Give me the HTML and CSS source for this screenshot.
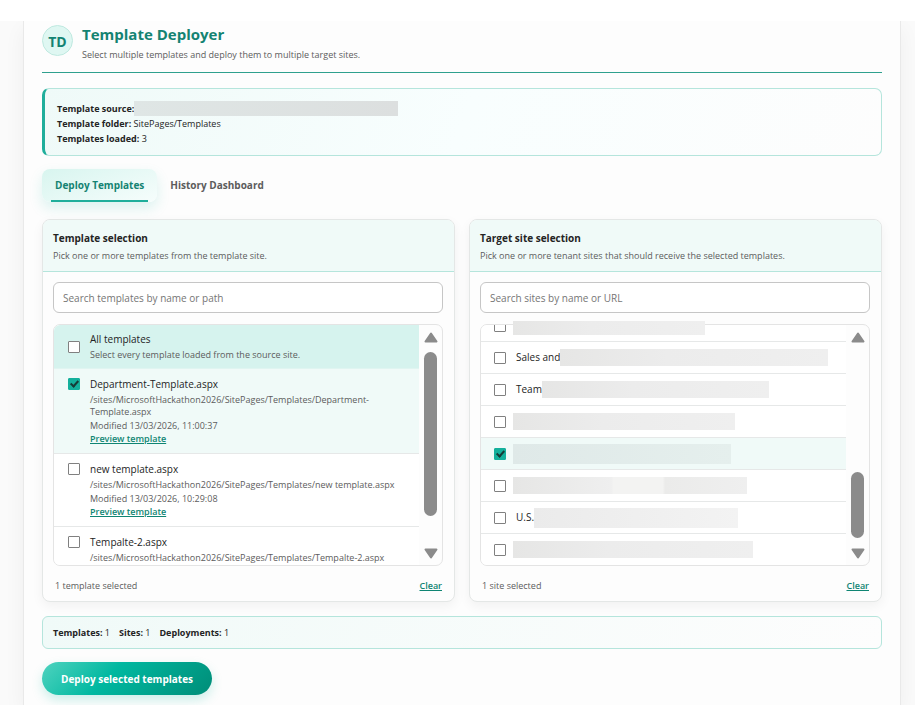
FILE: index.html
```
<!DOCTYPE html>
<html lang="en">
<head>
    <meta charset="UTF-8">
    <meta name="viewport" content="width=device-width, initial-scale=1.0">
    <title>Template Deployer</title>
    <link rel="stylesheet" href="styles.css">
</head>
<body>
<div class="topbar"></div>
<main class="shell">
    <header class="header">
        <div class="logo">TD</div>
        <div>
            <h1>Template Deployer</h1>
            <p>Select multiple templates and deploy them to multiple target sites.</p>
        </div>
    </header>

    <div class="info">
        <div class="info-line"><b>Template source:</b><span class="mask mask-source"></span></div>
        <div class="info-line"><b>Template folder:</b>&nbsp;SitePages/Templates</div>
        <div class="info-line"><b>Templates loaded:</b>&nbsp;3</div>
    </div>

    <nav class="tabs">
        <button type="button" class="tab active">Deploy Templates</button>
        <button type="button" class="tab">History Dashboard</button>
    </nav>

    <div class="panels">
        <section class="panel">
            <div class="panel-head">
                <h2>Template selection</h2>
                <p>Pick one or more templates from the template site.</p>
            </div>
            <div class="panel-body">
                <input type="text" class="search" placeholder="Search templates by name or path" aria-label="Search templates">
                <div class="list">
                    <div class="rows">
                        <div class="row all">
                            <input type="checkbox" id="t0">
                            <div class="row-text">
                                <label for="t0">All templates</label>
                                <p>Select every template loaded from the source site.</p>
                            </div>
                        </div>
                        <div class="row selected">
                            <input type="checkbox" id="t1" checked>
                            <div class="row-text">
                                <label for="t1">Department-Template.aspx</label>
                                <p>/sites/MicrosoftHackathon2026/SitePages/Templates/Department-Template.aspx</p>
                                <p>Modified 13/03/2026, 11:00:37</p>
                                <a href="#">Preview template</a>
                            </div>
                        </div>
                        <div class="row">
                            <input type="checkbox" id="t2">
                            <div class="row-text">
                                <label for="t2">new template.aspx</label>
                                <p>/sites/MicrosoftHackathon2026/SitePages/Templates/new template.aspx</p>
                                <p>Modified 13/03/2026, 10:29:08</p>
                                <a href="#">Preview template</a>
                            </div>
                        </div>
                        <div class="row">
                            <input type="checkbox" id="t3">
                            <div class="row-text">
                                <label for="t3">Tempalte-2.aspx</label>
                                <p>/sites/MicrosoftHackathon2026/SitePages/Templates/Tempalte-2.aspx</p>
                            </div>
                        </div>
                    </div>
                    <div class="scrollbar">
                        <svg width="14" height="11" viewBox="0 0 14 11"><path d="M7 1.5 L12.5 9.5 H1.5 Z"/></svg>
                        <div class="track"><div class="thumb thumb-top"></div></div>
                        <svg width="14" height="11" viewBox="0 0 14 11"><path d="M7 9.5 L12.5 1.5 H1.5 Z"/></svg>
                    </div>
                </div>
                <div class="panel-foot">
                    <span>1 template selected</span>
                    <a href="#">Clear</a>
                </div>
            </div>
        </section>

        <section class="panel">
            <div class="panel-head">
                <h2>Target site selection</h2>
                <p>Pick one or more tenant sites that should receive the selected templates.</p>
            </div>
            <div class="panel-body">
                <input type="text" class="search" placeholder="Search sites by name or URL" aria-label="Search sites">
                <div class="list">
                    <div class="mask mask-top"></div>
                    <div class="rows sites">
                        <div class="row"><input type="checkbox" id="s0" aria-label="Site"></div>
                        <div class="row"><input type="checkbox" id="s1"><label for="s1">Sales and</label><span class="mask" style="width:268px"></span></div>
                        <div class="row"><input type="checkbox" id="s2"><label for="s2">Team</label><span class="mask" style="width:227px"></span></div>
                        <div class="row"><input type="checkbox" id="s3" aria-label="Site"><span class="mask first" style="width:222px"></span></div>
                        <div class="row selected"><input type="checkbox" id="s4" aria-label="Site" checked><span class="mask first teal" style="width:218px"></span></div>
                        <div class="row"><input type="checkbox" id="s5" aria-label="Site"><span class="mask first patch" style="width:234px"></span></div>
                        <div class="row"><input type="checkbox" id="s6"><label for="s6">U.S.</label><span class="mask pale" style="width:204px"></span></div>
                        <div class="row"><input type="checkbox" id="s7" aria-label="Site"><span class="mask first" style="width:240px"></span></div>
                    </div>
                    <div class="scrollbar">
                        <svg width="14" height="11" viewBox="0 0 14 11"><path d="M7 1.5 L12.5 9.5 H1.5 Z"/></svg>
                        <div class="track end"><div class="thumb thumb-low"></div></div>
                        <svg width="14" height="11" viewBox="0 0 14 11"><path d="M7 9.5 L12.5 1.5 H1.5 Z"/></svg>
                    </div>
                </div>
                <div class="panel-foot">
                    <span>1 site selected</span>
                    <a href="#">Clear</a>
                </div>
            </div>
        </section>
    </div>

    <div class="summary">
        <span><b>Templates:</b> 1</span>
        <span><b>Sites:</b> 1</span>
        <span><b>Deployments:</b> 1</span>
    </div>

    <button type="button" class="deploy">Deploy selected templates</button>
</main>
</body>
</html>
```
FILE: styles.css
```
*, *::after {
    box-sizing: border-box;
}
html {
    height: 100%;
    overflow: hidden;
}
body {
    margin: 0;
    min-height: 100%;
    display: flex;
    flex-direction: column;
    background: #fafafa;
    color: #242424;
    font-family: "Open Sans", "Noto Sans", sans-serif;
    font-size: 9px;
    line-height: 12px;
}
h1, h2, p {
    margin: 0;
}
b, h2 {
    font-weight: 700;
}
button, input {
    font-family: inherit;
}
a {
    color: #0f8573;
    text-decoration: underline;
}

.topbar {
    height: 21px;
    background: #fff;
}
.shell {
    flex: 1;
    margin: 0 14px 0 23px;
    padding: 4px 18px 10px;
    background: #fdfdfd;
    border-left: 1px solid #e9e9e9;
    border-right: 1px solid #e9e9e9;
    box-shadow: 0 8px 20px rgba(0, 0, 0, 0.05);
    clip-path: inset(0 -30px);
}

/* header */
.header {
    display: flex;
    gap: 9px;
    height: 48px;
    border-bottom: 1px solid #2fa08e;
}
.logo {
    width: 31px;
    height: 31px;
    border: 1px solid #bfe9e0;
    border-radius: 50%;
    background: #dff7f2;
    color: #148372;
    font-size: 14px;
    font-weight: 700;
    line-height: 31px;
    text-align: center;
}
.header h1 {
    color: #148372;
    font-size: 15px;
    font-weight: 700;
    line-height: 18px;
}
.header p {
    margin-top: 6px;
    color: #5c5c5c;
}

/* source info */
.info {
    margin-top: 15px;
    padding: 12px 11px 9px 12px;
    border: 1px solid #b5e5dc;
    border-left: 3px solid #1fae9b;
    border-radius: 7px;
    background: linear-gradient(110deg, #effaf8, #f8fefe 50%, #fdfdfd);
}
.info-line {
    display: flex;
    align-items: center;
    height: 15px;
}

/* blanked out values */
.mask {
    height: 17px;
    background: linear-gradient(90deg, #e6e6e5, #ececec 40%, #efefef);
}
.mask-source {
    width: 264px;
    height: 15px;
    background: linear-gradient(90deg, #dfe6e5, #dcdfdf);
}
.mask-top {
    position: absolute;
    top: -4px;
    left: 32px;
    width: 192px;
    height: 14px;
}
.mask.teal {
    height: 20px;
    background: linear-gradient(90deg, #dfe9e8, #e5efed);
}
.mask.pale {
    height: 20px;
    background: linear-gradient(90deg, #ebebeb, #f3f3f3);
}
.mask.patch {
    background: linear-gradient(90deg, #e6e6e5, #efefef 42%, #f3f3f2 43%, #f3f3f2 64%, #ebebea 65%, #efefef);
}

/* tabs */
.tabs {
    display: flex;
    margin-top: 13px;
}
.tab {
    position: relative;
    height: 33px;
    padding: 0 13px 1px;
    border: 0;
    border-radius: 8px;
    background: none;
    color: #5c5c5c;
    font-size: 10px;
    font-weight: 700;
}
.tab.active {
    background: linear-gradient(160deg, #d8f5ef, #f6fdfc);
    box-shadow: 0 6px 14px rgba(0, 178, 155, 0.14);
    color: #148372;
}
.tab.active::after {
    content: "";
    position: absolute;
    left: 9px;
    right: 9px;
    bottom: 0;
    height: 2px;
    background: #1fae9b;
}

/* panels */
.panels {
    display: grid;
    grid-template-columns: 1fr 1fr;
    gap: 14px;
    margin-top: 17px;
}
.panel {
    border: 1px solid #e4e7e6;
    border-radius: 8px;
    background: #fdfdfd;
    box-shadow: 0 4px 12px rgba(0, 0, 0, 0.05);
}
.panel-head {
    height: 52px;
    padding: 10px;
    border-bottom: 1px solid #b5e5dc;
    border-radius: 7px 7px 0 0;
    background: #f0faf8;
}
.panel-head h2 {
    font-size: 10px;
    line-height: 16px;
}
.panel-head p {
    margin-top: 4px;
    color: #5c5c5c;
}
.panel-body {
    padding: 10px 11px 7px 10px;
}
.search {
    display: block;
    width: 100%;
    height: 31px;
    padding: 0 9px;
    border: 1px solid #c6c6c6;
    border-radius: 6px;
    background: #fff;
    color: #242424;
    font-size: 10px;
}
.search::placeholder {
    color: #757575;
}
.list {
    position: relative;
    display: flex;
    height: 242px;
    margin-top: 11px;
    border: 1px solid #e4e4e4;
    border-radius: 7px;
}
.rows {
    flex: 1;
    min-width: 0;
    display: flex;
    flex-direction: column;
    overflow: hidden;
    border-radius: 6px 0 0 6px;
    background: #fff;
}
.row {
    flex: none;
    display: flex;
    align-items: flex-start;
    padding: 8px 14px 7px;
    border-bottom: 1px solid #e6e8e8;
}
.row.all {
    align-items: center;
    padding: 7px 14px;
    border-color: #e0f5f1;
    background: #d6f3ee;
}
.row.selected {
    background: #f0faf8;
}
.row input {
    appearance: none;
    flex: none;
    position: relative;
    width: 12px;
    height: 12px;
    margin: 1px 10px 0 0;
    border: 1px solid #808080;
    border-radius: 1px;
    background: #fff;
}
.row.all input {
    margin-top: 0;
}
.row input:checked {
    border-color: #14b09c;
    background: #14b09c;
}
.row input:checked::after {
    content: "";
    position: absolute;
    left: 3px;
    top: 0;
    width: 5px;
    height: 8px;
    border: solid #163c37;
    border-width: 0 2px 2px 0;
    transform: rotate(42deg);
}
.row label {
    display: block;
    font-size: 10px;
    font-weight: 500;
    line-height: 15px;
}
.row-text {
    min-width: 0;
}
.row p {
    margin-top: 2px;
    color: #5c5c5c;
}
.row a {
    display: block;
    width: max-content;
    font-weight: 600;
    line-height: 14px;
}
.sites {
    justify-content: flex-end;
}
.sites .row {
    align-items: center;
    height: 32px;
    padding: 0 13px;
}
.sites .row:last-child {
    margin-bottom: -1px;
}
.sites .row input {
    margin-top: 0;
}
.sites .mask.first {
    margin-left: -3px;
}

/* scrollbar */
.scrollbar {
    display: flex;
    flex-direction: column;
    align-items: center;
    width: 23px;
    padding: 7px 0 6px;
}
.scrollbar svg {
    fill: #8b8b8b;
    stroke: #8b8b8b;
    stroke-width: 2;
    stroke-linejoin: round;
}
.track {
    flex: 1;
    display: flex;
    width: 13px;
    padding: 9px 0 10px;
}
.track.end {
    align-items: flex-end;
}
.thumb {
    width: 13px;
    border-radius: 7px;
    background: #8b8b8b;
}
.thumb-top {
    height: 164px;
}
.thumb-low {
    height: 66px;
}

.panel-foot {
    display: flex;
    justify-content: space-between;
    margin-top: 12px;
    padding: 0 1px 0 2px;
    line-height: 16px;
    color: #5c5c5c;
}
.panel-foot a {
    font-weight: 600;
}

/* totals and action */
.summary {
    display: flex;
    gap: 9px;
    margin-top: 14px;
    padding: 10px 10px 9px;
    border: 1px solid #b5e5dc;
    border-radius: 6px;
    background: linear-gradient(110deg, #f0faf8, #fdfdfd);
}
.deploy {
    height: 33px;
    margin-top: 13px;
    padding: 0 19px;
    border: 0;
    border-radius: 17px;
    background: linear-gradient(135deg, #4fd3bf, #00b8a0 40%, #008d78);
    box-shadow: 0 5px 12px rgba(0, 178, 155, 0.2);
    color: #fff;
    font-size: 10px;
    font-weight: 700;
}
```
